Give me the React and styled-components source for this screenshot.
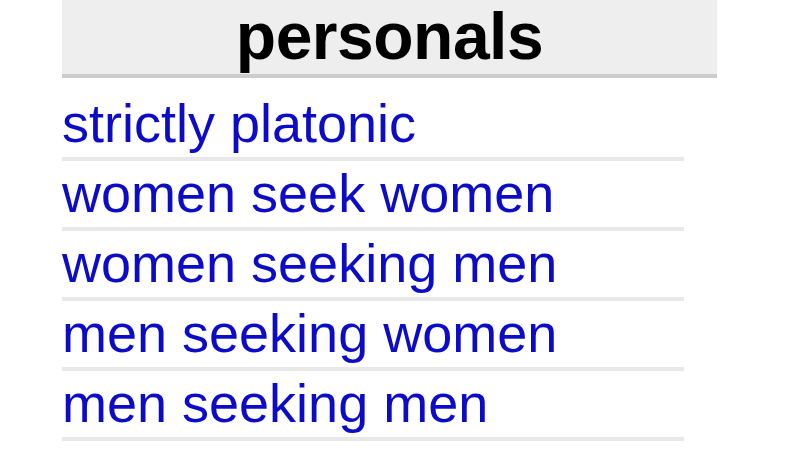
import React from "react";
import styled, { createGlobalStyle } from "styled-components";

const Global = createGlobalStyle`
  html, body { margin: 0; padding: 0; background: #ffffff; }
  body { font-family: "Liberation Sans", Arial, sans-serif; overflow: hidden; }
`;

const Page = styled.div`
  width: 800px;
  height: 450px;
  overflow: hidden;
  padding-left: 62px;
  box-sizing: border-box;
`;

const Section = styled.div`
  display: flex;
  flex-direction: column;
  width: 655px;
`;

const Header = styled.h4`
  margin: 0;
  height: 74px;
  background: #eeeeee;
  border-bottom: 4px solid #cccccc;
  font-family: "Liberation Sans", Arial, sans-serif;
  font-weight: bold;
  font-size: 66px;
  line-height: 72px;
  text-align: center;
  color: #000000;
  letter-spacing: -0.5px;
`;

const List = styled.ul`
  list-style: none;
  margin: 13px 0 0 0;
  padding: 0;
  width: 622px;
`;

const Item = styled.li`
  height: 66px;
  border-bottom: 4px solid #e8e8e8;
  line-height: 65px;
  font-size: 54px;
  white-space: nowrap;
`;

const Link = styled.a`
  color: #0c0cc8;
  text-decoration: none;
`;

const items = [
  "strictly platonic",
  "women seek women",
  "women seeking men",
  "men seeking women",
  "men seeking men",
];

export default function App() {
  return (
    <>
      <Global />
      <Page>
        <Section>
          <Header>personals</Header>
          <List>
            {items.map((t) => (
              <Item key={t}>
                <Link href="#">{t}</Link>
              </Item>
            ))}
          </List>
        </Section>
      </Page>
    </>
  );
}
